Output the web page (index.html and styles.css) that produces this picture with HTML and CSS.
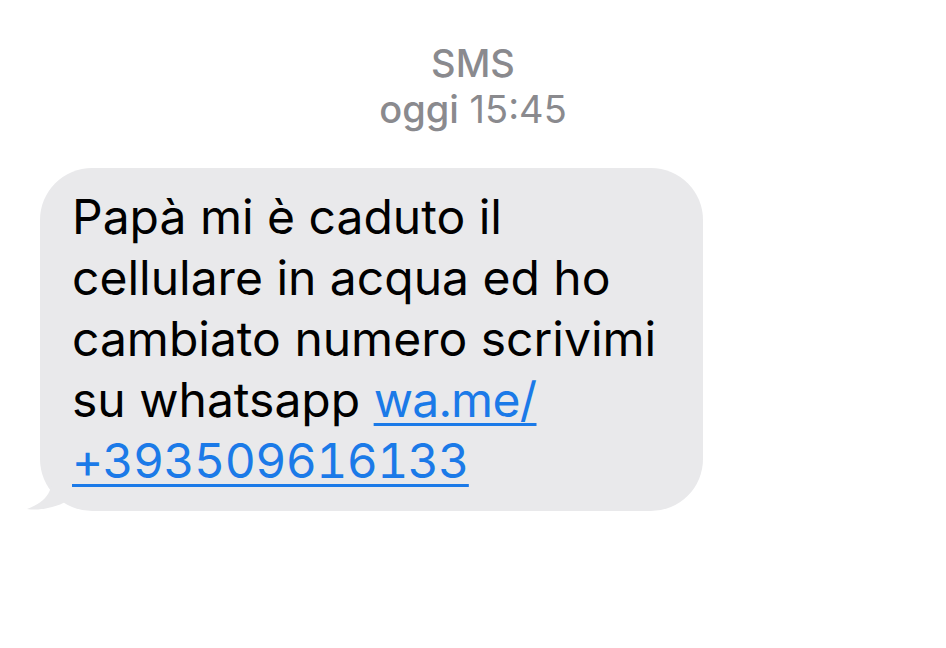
FILE: index.html
```html
<!DOCTYPE html>
<html lang="it">

<head>
    <meta charset="UTF-8">
    <meta name="viewport" content="width=device-width, initial-scale=1.0">
    <title>SMS</title>
    <link rel="stylesheet" href="styles.css">
</head>

<body>
    <div class="thread">
        <div class="thread-header">
            <p class="thread-service">SMS</p>
            <p class="thread-time"><span class="thread-day">oggi</span> 15:45</p>
        </div>

        <div class="bubble">
            <p class="bubble-text">Papà mi è caduto il cellulare in acqua ed ho cambiato numero scrivimi su whatsapp <a class="bubble-link" href="#">wa.me/ +393509616133</a></p>
            <svg class="bubble-tail" xmlns="http://www.w3.org/2000/svg" viewBox="0 0 40 40">
                <path d="M26 0 C26 18 22 30 0 38 C14 40 30 36 40 30 L40 0 Z" fill="#e9e9eb" />
            </svg>
        </div>
    </div>
</body>

</html>
```

FILE: styles.css
```css
* {
    margin: 0;
    padding: 0;
    box-sizing: border-box;
}

body {
    font-family: 'Inter', 'Liberation Sans', sans-serif;
    background-color: #fff;
    color: #000;
}

.thread {
    padding-top: 40px;
    display: flex;
    flex-direction: column;
}

.thread-header {
    text-align: center;
    color: #8a8a8e;
    font-size: 38px;
    line-height: 46px;
}

.thread-service {
    font-weight: 500;
}

.thread-day {
    font-weight: 500;
}

.bubble {
    position: relative;
    width: 663px;
    margin-top: 36px;
    margin-left: 40px;
    padding: 18px 30px 20px 32px;
    background-color: #e9e9eb;
    border-radius: 52px;
}

.bubble-text {
    font-size: 48px;
    line-height: 61px;
}

.bubble-link {
    color: #1b7ae8;
    text-decoration: underline;
    text-decoration-thickness: 3px;
    text-underline-offset: 6px;
    font-variant-numeric: tabular-nums;
    letter-spacing: -0.6px;
}

.bubble-tail {
    position: absolute;
    left: -13px;
    bottom: 0;
    width: 40px;
    height: 40px;
}
```
